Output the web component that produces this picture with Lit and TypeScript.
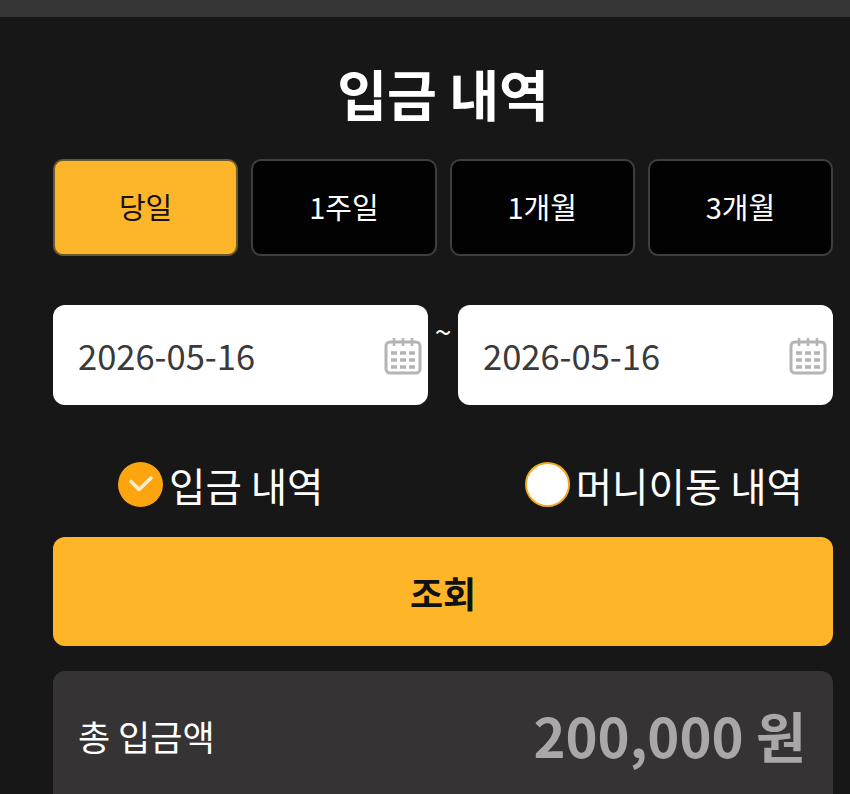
import { LitElement, html, css, svg } from "lit";
import { customElement } from "lit/decorators.js";

const calendar = html`<svg class="cal" viewBox="0 0 38 38" width="38" height="38" fill="none" stroke="#b4b4b4">
  <rect x="2" y="5" width="34" height="31" rx="4" stroke-width="3"/>
  <path d="M10 1v8M19 1v8M28 1v8" stroke-width="2.5"/>
  <path d="M7 16h6M16 16h6M25 16h6M7 23h6M16 23h6M25 23h6M7 30h6M16 30h6M25 30h6" stroke-width="3.4"/>
</svg>`;

@customElement("app-root")
export class AppRoot extends LitElement {
  static styles = css`
    :host {
      display: block;
      width: 850px;
      height: 794px;
      overflow: hidden;
      background: #171717;
      color: #fff;
      font-family: "Noto Sans CJK KR", "Noto Sans", sans-serif;
    }
    .topbar { height: 17px; background: #363636; }
    .content { padding: 0 17px 0 53px; display: flex; flex-direction: column; }
    h1 {
      margin: 0;
      height: 142px;
      line-height: 152px;
      font-size: 54.2px;
      font-weight: 700;
      text-align: center;
      white-space: nowrap;
    }
    .tabs { display: grid; grid-template-columns: repeat(4, 1fr); gap: 13px; }
    .tab {
      height: 97px;
      box-sizing: border-box;
      border: 2px solid #3f3f3f;
      border-radius: 10px;
      background: #020203;
      color: #fff;
      font: 400 29px "Noto Sans CJK KR", sans-serif;
      padding: 0 0 3px;
    }
    .tab.on { background: #fdb62a; color: #1a1208; border-color: #6b5a30; }
    .dates { display: flex; align-items: flex-start; margin-top: 49px; }
    .date {
      flex: 0 0 375px;
      height: 100px;
      box-sizing: border-box;
      background: #fff;
      border-radius: 12px;
      display: flex;
      align-items: center;
      justify-content: space-between;
      padding: 0 6px 0 25px;
      color: #3a3a3a;
      font-size: 34.5px;
    }
    .cal { display: block; margin-top: 2px; }
    .tilde { flex: 1; text-align: center; font-size: 30px; line-height: 50px; }
    .radios {
      display: flex;
      justify-content: space-between;
      padding: 0 30px 0 65px;
      margin-top: 49px;
      height: 60px;
      font-size: 39.6px;
      align-items: center;
    }
    .radio { display: flex; align-items: center; gap: 6px; white-space: nowrap; }
    .dot {
      width: 45px;
      height: 45px;
      box-sizing: border-box;
      border-radius: 50%;
      display: flex;
      align-items: center;
      justify-content: center;
    }
    .dot.on { background: #fda50f; }
    .dot.off { background: #fff; border: 2px solid #f0ab24; }
    .search {
      margin-top: 23px;
      height: 109px;
      border: 0;
      border-radius: 12px;
      background: #feb628;
      color: #111;
      font: 700 36px "Noto Sans CJK KR", sans-serif;
      padding: 0;
    }
    .total {
      margin-top: 25px;
      height: 140px;
      box-sizing: border-box;
      border-radius: 12px 12px 0 0;
      background: #353334;
      display: flex;
      justify-content: space-between;
      align-items: flex-start;
      padding: 31px 27px 0 25px;
    }
    .label { font-size: 35px; line-height: 68px; }
    .amount { font-size: 54.4px; font-weight: 700; color: #a9a7a8; line-height: 66px; white-space: nowrap; }
  `;

  render() {
    const tabs = ["당일", "1주일", "1개월", "3개월"];
    return html`
      <div class="topbar"></div>
      <div class="content">
        <h1>입금 내역</h1>
        <div class="tabs">
          ${tabs.map((t, i) => html`<button class="tab ${i === 0 ? "on" : ""}">${t}</button>`)}
        </div>
        <div class="dates">
          <div class="date"><span>2026-05-16</span>${calendar}</div>
          <div class="tilde">~</div>
          <div class="date"><span>2026-05-16</span>${calendar}</div>
        </div>
        <div class="radios">
          <div class="radio">
            <span class="dot on">
              <svg width="26" height="20" viewBox="0 0 26 20" fill="none" stroke="#ffeccb" stroke-width="3.6" stroke-linecap="round" stroke-linejoin="round">
                ${svg`<path d="M3 7.5 11 15.5 23 4"/>`}
              </svg>
            </span>
            <span>입금 내역</span>
          </div>
          <div class="radio">
            <span class="dot off"></span>
            <span>머니이동 내역</span>
          </div>
        </div>
        <button class="search">조회</button>
        <div class="total">
          <span class="label">총 입금액</span>
          <span class="amount">200,000 원</span>
        </div>
      </div>
    `;
  }
}
